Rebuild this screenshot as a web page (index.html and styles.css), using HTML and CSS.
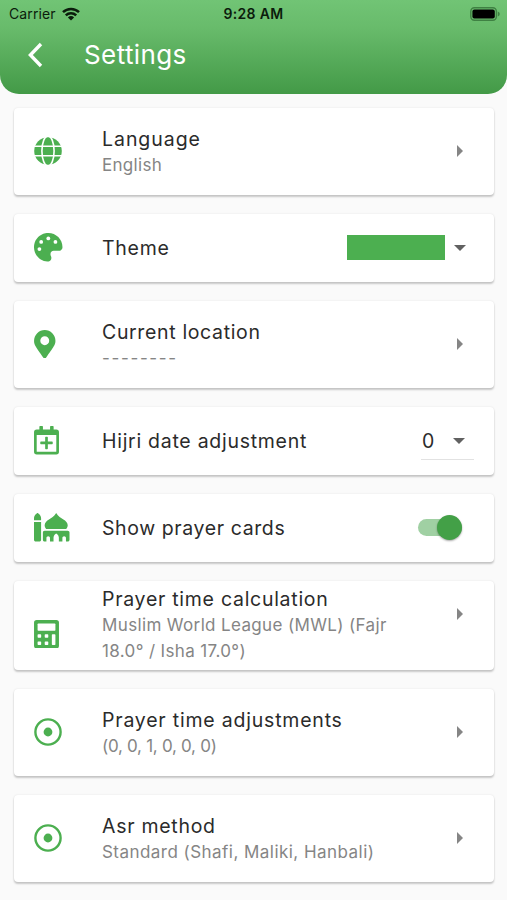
FILE: index.html
```
<!DOCTYPE html>
<html lang="en">
  <head>
    <meta charset="utf-8">
    <title>Settings</title>
    <link rel="stylesheet" href="styles.css">
  </head>
  <body>
    <header class="header">
      <div class="status-bar">
        <div class="carrier">
          <span>Carrier</span>
          <svg class="wifi" viewBox="0 0 18 14" fill="none" stroke="#0b1c0c" stroke-width="2.5">
            <path d="M1 5.2a11.4 11.4 0 0 1 16 0M3.8 8.3a7.4 7.4 0 0 1 10.4 0"/>
            <path d="M9 13.6 5.9 10.4a4.5 4.5 0 0 1 6.2 0z" fill="#0b1c0c" stroke="none"/>
          </svg>
        </div>
        <div class="clock">9:28 AM</div>
        <svg class="battery" viewBox="0 0 30 14">
          <rect x="0.8" y="0.8" width="25.6" height="12.4" rx="3.6" fill="none" stroke="#3f8143" stroke-width="1.4"/>
          <rect x="2.4" y="2.4" width="22.4" height="9.2" rx="2" fill="#000"/>
          <path d="M27.8 4.6q2 .8 2 2.4t-2 2.4z" fill="#3f8143"/>
        </svg>
      </div>
      <div class="title-bar">
        <svg class="back" viewBox="0 0 16 26" fill="none" stroke="#fff" stroke-width="3.4">
          <path d="M14 2 3.4 13 14 24"/>
        </svg>
        <h1>Settings</h1>
      </div>
    </header>

    <main class="settings">
      <div class="card tall">
        <div class="icon">
          <svg width="28" height="28" viewBox="0 0 28 28">
            <circle cx="14" cy="14" r="13.8" fill="#4caf50"/>
            <g fill="none" stroke="#fff" stroke-width="1.6">
              <ellipse cx="14" cy="14" rx="6.1" ry="15"/>
              <path d="M0 9.2h28M0 18.8h28"/>
            </g>
          </svg>
        </div>
        <div class="text two-line">
          <div class="name language">Language</div>
          <div class="value">English</div>
        </div>
        <span class="arrow-right"></span>
      </div>

      <div class="card">
        <div class="icon">
          <svg width="28.5" height="28.5" viewBox="0 0 512 512" fill="#4caf50">
            <path d="M204 6C105 25 25 105 5 204c-37 187 131 326 258 306 41-6 61-54 42-91-23-45 0-98 50-98h90c37 0 67-31 67-67C511 95 368-26 204 6z"/>
            <g fill="#fff">
              <circle cx="97" cy="288" r="34"/>
              <circle cx="129" cy="161" r="34"/>
              <circle cx="257" cy="97" r="34"/>
              <circle cx="385" cy="161" r="34"/>
            </g>
          </svg>
        </div>
        <div class="text">
          <div class="name">Theme</div>
        </div>
        <span class="swatch"></span>
        <span class="arrow-down"></span>
      </div>

      <div class="card tall">
        <div class="icon">
          <svg width="21.5" height="28.5" viewBox="0 0 384 512" fill="#4caf50">
            <path d="M172 502C27 291 0 269 0 192a192 192 0 0 1 384 0c0 77-27 99-172 310a24 24 0 0 1-40 0zM192 272a80 80 0 1 0 0-160 80 80 0 0 0 0 160z"/>
          </svg>
        </div>
        <div class="text two-line">
          <div class="name location">Current location</div>
          <div class="value dashes">--------</div>
        </div>
        <span class="arrow-right"></span>
      </div>

      <div class="card">
        <div class="icon">
          <svg width="25" height="28.5" viewBox="0 0 448 512" fill="#4caf50">
            <path d="M400 64h-48V12a12 12 0 0 0-12-12h-40a12 12 0 0 0-12 12v52H160V12a12 12 0 0 0-12-12h-40a12 12 0 0 0-12 12v52H48a48 48 0 0 0-48 48v352a48 48 0 0 0 48 48h352a48 48 0 0 0 48-48V112a48 48 0 0 0-48-48zm-6 400H54a6 6 0 0 1-6-6V160h352v298a6 6 0 0 1-6 6z"/>
            <path d="M336 292v24a12 12 0 0 1-12 12h-76v76a12 12 0 0 1-12 12h-24a12 12 0 0 1-12-12v-76h-76a12 12 0 0 1-12-12v-24a12 12 0 0 1 12-12h76v-76a12 12 0 0 1 12-12h24a12 12 0 0 1 12 12v76h76a12 12 0 0 1 12 12z"/>
          </svg>
        </div>
        <div class="text">
          <div class="name">Hijri date adjustment</div>
        </div>
        <div class="select">
          <span>0</span>
          <span class="arrow-down"></span>
        </div>
      </div>

      <div class="card">
        <div class="icon">
          <svg width="35.5" height="28.5" viewBox="0 0 640 512" fill="#4caf50">
            <path d="M0 480c0 18 14 32 32 32h64c18 0 32-14 32-32V160H0zM579 288c18-18 29-42 29-69 0-48-38-80-78-104-44-27-94-52-130-115-36 63-86 88-130 115-40 24-78 56-78 104 0 27 11 51 29 69zM608 320H192c-18 0-32 14-32 32v128c0 18 14 32 32 32h32v-64c0-18 14-32 32-32s32 14 32 32v64h64v-72c0-48 48-72 48-72s48 24 48 72v72h64v-64c0-18 14-32 32-32s32 14 32 32v64h32c18 0 32-14 32-32V352c0-18-14-32-32-32zM64 0S0 32 0 96v32h128V96C128 32 64 0 64 0z"/>
          </svg>
        </div>
        <div class="text">
          <div class="name cards">Show prayer cards</div>
        </div>
        <span class="switch"></span>
      </div>

      <div class="card calculation">
        <div class="icon">
          <svg width="25" height="28.5" viewBox="0 0 448 512">
            <rect width="448" height="512" rx="48" fill="#4caf50"/>
            <g fill="#fff">
              <rect x="64" y="64" width="320" height="128" rx="13"/>
              <rect x="64" y="256" width="64" height="64" rx="13"/>
              <rect x="192" y="256" width="64" height="64" rx="13"/>
              <rect x="64" y="384" width="64" height="64" rx="13"/>
              <rect x="192" y="384" width="64" height="64" rx="13"/>
              <rect x="320" y="256" width="64" height="192" rx="13"/>
            </g>
          </svg>
        </div>
        <div class="text">
          <div class="name">Prayer time calculation</div>
          <div class="value mwl">Muslim World League (MWL) (Fajr<br>18.0° / Isha 17.0°)</div>
        </div>
        <span class="arrow-right"></span>
      </div>

      <div class="card tall">
        <div class="icon">
          <svg width="28" height="28" viewBox="0 0 28 28">
            <circle cx="14" cy="14" r="12.6" fill="none" stroke="#4caf50" stroke-width="2.4"/>
            <circle cx="14" cy="14" r="4.4" fill="#4caf50"/>
          </svg>
        </div>
        <div class="text two-line">
          <div class="name adjustments">Prayer time adjustments</div>
          <div class="value offsets">(0, 0, 1, 0, 0, 0)</div>
        </div>
        <span class="arrow-right"></span>
      </div>

      <div class="card tall">
        <div class="icon">
          <svg width="28" height="28" viewBox="0 0 28 28">
            <circle cx="14" cy="14" r="12.6" fill="none" stroke="#4caf50" stroke-width="2.4"/>
            <circle cx="14" cy="14" r="4.4" fill="#4caf50"/>
          </svg>
        </div>
        <div class="text two-line">
          <div class="name">Asr method</div>
          <div class="value standard">Standard (Shafi, Maliki, Hanbali)</div>
        </div>
        <span class="arrow-right"></span>
      </div>
    </main>
  </body>
</html>
```
FILE: styles.css
```
* {
    box-sizing: border-box;
}

body {
    margin: 0;
    height: 900px;
    overflow: hidden;
    background-color: #fafafa;
    font-family: Inter, "Open Sans", sans-serif;
    color: #2b2b2b;
}

.header {
    height: 94px;
    border-radius: 0 0 19px 19px;
    background: linear-gradient(#71c475, #68bb6b 30%, #439a47);
}

/* status bar */
.status-bar {
    display: grid;
    grid-template-columns: 1fr auto 1fr;
    align-items: center;
    height: 27px;
    padding: 0 7px 0 9px;
    color: #0b1c0c;
    font-size: 14px;
}

.carrier {
    display: flex;
    align-items: center;
    gap: 6px;
    letter-spacing: 0.1px;
}

.wifi {
    width: 18px;
    height: 14px;
}

.clock {
    margin-right: 2px;
    font-weight: 600;
    letter-spacing: 0.3px;
}

.battery {
    width: 30px;
    height: 14px;
    justify-self: end;
}

/* title */
.title-bar {
    display: flex;
    align-items: center;
    height: 56px;
    padding-left: 27px;
    color: #fff;
}

.back {
    width: 16px;
    height: 26px;
}

.title-bar h1 {
    margin: 0 0 0 41px;
    font-size: 26px;
    line-height: 32px;
    font-weight: 400;
    letter-spacing: 0.4px;
}

/* cards */
.settings {
    display: flex;
    flex-direction: column;
    gap: 19px;
    padding: 13.5px 13px 0 14px;
}

.card {
    display: flex;
    align-items: center;
    height: 68px;
    padding: 0 31px 0 20px;
    border-radius: 4px;
    background-color: #fff;
    box-shadow: 0 2px 2px rgba(0, 0, 0, 0.2), 0 0 2px rgba(0, 0, 0, 0.1);
}

.card.tall {
    height: 87px;
}

.card.calculation {
    height: 89px;
}

.icon {
    display: flex;
    width: 68px;
}

.text {
    flex: 1;
    white-space: nowrap;
}

.text.two-line {
    padding-top: 3px;
}

.name {
    font-size: 19.5px;
    line-height: 26px;
    letter-spacing: 0.72px;
}

.name.language {
    letter-spacing: 0.95px;
}

.name.location {
    letter-spacing: 0.65px;
}

.name.cards {
    letter-spacing: 0.6px;
}

.name.adjustments {
    letter-spacing: 0.79px;
}

.value {
    margin-top: 1px;
    font-size: 17px;
    line-height: 25.5px;
    letter-spacing: 0.3px;
    color: #858585;
}

.value.dashes {
    letter-spacing: 1.65px;
}

.value.mwl {
    letter-spacing: 0.36px;
}

.value.offsets {
    letter-spacing: -0.28px;
}

.value.standard {
    letter-spacing: 0.46px;
}

.arrow-right {
    border-left: 6px solid #858585;
    border-top: 6px solid transparent;
    border-bottom: 6px solid transparent;
}

.arrow-down {
    border-top: 6px solid #616161;
    border-left: 6px solid transparent;
    border-right: 6px solid transparent;
}

.card > .arrow-down {
    margin: 1px -3px 0 9px;
}

.calculation .icon {
    padding-top: 18px;
}

.calculation .arrow-right {
    margin-bottom: 23px;
}

.swatch {
    width: 98px;
    height: 25px;
    background-color: #4caf50;
}

.select {
    display: flex;
    align-items: center;
    justify-content: space-between;
    width: 53px;
    height: 39px;
    margin-right: -11px;
    padding: 1px 9px 0 1px;
    border-bottom: 1px solid #e2e2e2;
    font-size: 19.5px;
}

.switch {
    display: flex;
    align-items: center;
    justify-content: flex-end;
    width: 44px;
    height: 17px;
    margin-right: 1px;
    border-radius: 9px;
    background-color: #a0d0a3;
}

.switch::after {
    content: "";
    width: 25px;
    height: 25px;
    border-radius: 50%;
    background-color: #43a047;
    box-shadow: 0 1px 2px rgba(0, 0, 0, 0.35);
}
```
